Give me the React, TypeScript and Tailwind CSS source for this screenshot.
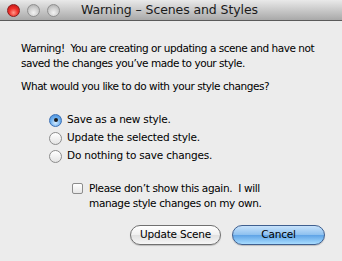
import React from 'react';

const font = { fontFamily: '"Lucida Grande", "DejaVu Sans", sans-serif' };

const Light = ({ red }: { red?: boolean }) => (
  <div
    className={`w-[13px] h-[13px] rounded-full border ${
      red
        ? 'border-[#8a1d1d] bg-[radial-gradient(circle_at_50%_70%,#ff9a8a_0%,#f0302a_45%,#b81010_100%)]'
        : 'border-[#8f8f8f] bg-[radial-gradient(circle_at_50%_70%,#f2f2f2_0%,#cfcfcf_50%,#a6a6a6_100%)]'
    }`}
  />
);

const Radio = ({ checked, label }: { checked?: boolean; label: string }) => (
  <div className="flex items-center h-[18px]">
    <div
      className={`w-[13px] h-[13px] rounded-full border flex items-center justify-center ${
        checked
          ? 'border-[#3a6fb5] bg-[radial-gradient(circle_at_50%_70%,#d6ecff_0%,#6fb0ee_50%,#3d86d6_100%)]'
          : 'border-[#8c8c8c] bg-[linear-gradient(#ffffff,#e4e4e4)]'
      }`}
    >
      {checked && <div className="w-[4px] h-[4px] rounded-full bg-[#1a1a1a]" />}
    </div>
    <span className="ml-[5px] text-[10.5px] tracking-[-0.2px] text-black">{label}</span>
  </div>
);

export default function App() {
  return (
    <div className="w-[342px] h-[261px] bg-[#ececec] overflow-hidden" style={font}>
      <div className="h-[21px] flex items-center border-b border-[#5a5a5a] bg-[linear-gradient(#e9e9e9,#a9a9a9)]">
        <div className="flex gap-[7px] pl-[7px]">
          <Light red />
          <Light />
          <Light />
        </div>
        <div className="ml-[21px] text-[12.5px] tracking-[-0.1px] text-[#1a1a1a]">Warning – Scenes and Styles</div>
      </div>

      <div className="pl-[21px] pt-[20px] text-[10.5px] tracking-[-0.45px] leading-[15px] text-black">
        <p className="whitespace-pre">{'Warning!  You are creating or updating a scene and have not\nsaved the changes you\u2019ve made to your style.'}</p>
        <p className="mt-[8px]">What would you like to do with your style changes?</p>
      </div>

      <div className="pl-[49px] pt-[17px]">
        <Radio checked label="Save as a new style." />
        <Radio label="Update the selected style." />
        <Radio label="Do nothing to save changes." />
      </div>

      <div className="pl-[72px] pt-[16px] flex items-start">
        <div className="mt-[2px] w-[11px] h-[11px] border border-[#8c8c8c] rounded-[2px] bg-[linear-gradient(#ffffff,#e6e6e6)]" />
        <p className="ml-[6px] text-[10.5px] tracking-[-0.35px] leading-[15px] whitespace-pre">{'Please don\u2019t show this again.  I will\nmanage style changes on my own.'}</p>
      </div>

      <div className="flex justify-end gap-[11px] pr-[17px] pt-[14px]">
        <button className="w-[91px] h-[20px] rounded-full border border-[#707070] bg-[linear-gradient(#ffffff,#f0f0f0_50%,#e0e0e0_51%,#f6f6f6)] text-[10.5px] tracking-[-0.2px] text-black shadow-[0_1px_1px_rgba(0,0,0,0.2)]">
          Update Scene
        </button>
        <button className="w-[93px] h-[20px] rounded-full border border-[#3f5f8f] bg-[linear-gradient(#c7e2fb,#8cc0ef_50%,#5ea3e6_51%,#a8dcff)] text-[10.5px] tracking-[-0.2px] text-black shadow-[0_1px_1px_rgba(0,0,0,0.2)]">
          Cancel
        </button>
      </div>
    </div>
  );
}
